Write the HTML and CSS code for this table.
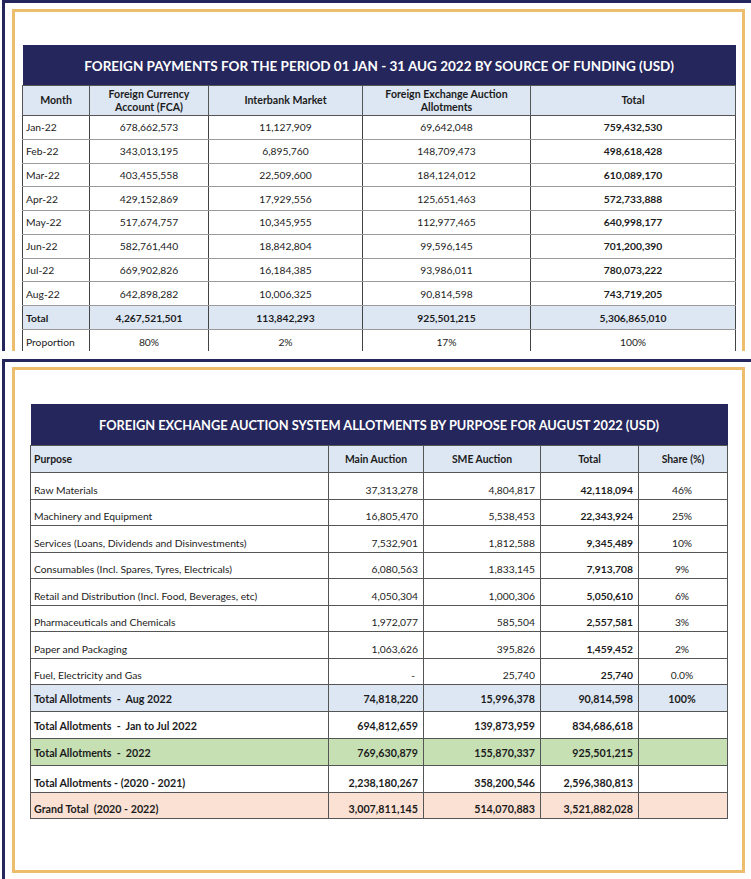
FILE: index.html
```html
<!DOCTYPE html>
<html>
<head>
<meta charset="utf-8">
<title>Foreign Payments</title>
<link rel="stylesheet" href="styles.css">
</head>
<body>
<div class="panel p1">
  <div class="frame f1">
    <table class="t1">
      <colgroup><col class="a1"><col class="a2"><col class="a3"><col class="a4"><col class="a5"></colgroup>
      <tr class="title"><th colspan="5">FOREIGN PAYMENTS FOR THE PERIOD 01 JAN - 31 AUG 2022 BY SOURCE OF FUNDING (USD)</th></tr>
      <tr class="head"><th>Month</th><th>Foreign Currency<br>Account (FCA)</th><th>Interbank Market</th><th>Foreign Exchange Auction<br>Allotments</th><th>Total</th></tr>
      <tr><td class="l">Jan-22</td><td>678,662,573</td><td>11,127,909</td><td>69,642,048</td><td class="b">759,432,530</td></tr>
      <tr><td class="l">Feb-22</td><td>343,013,195</td><td>6,895,760</td><td>148,709,473</td><td class="b">498,618,428</td></tr>
      <tr><td class="l">Mar-22</td><td>403,455,558</td><td>22,509,600</td><td>184,124,012</td><td class="b">610,089,170</td></tr>
      <tr><td class="l">Apr-22</td><td>429,152,869</td><td>17,929,556</td><td>125,651,463</td><td class="b">572,733,888</td></tr>
      <tr><td class="l">May-22</td><td>517,674,757</td><td>10,345,955</td><td>112,977,465</td><td class="b">640,998,177</td></tr>
      <tr><td class="l">Jun-22</td><td>582,761,440</td><td>18,842,804</td><td>99,596,145</td><td class="b">701,200,390</td></tr>
      <tr><td class="l">Jul-22</td><td>669,902,826</td><td>16,184,385</td><td>93,986,011</td><td class="b">780,073,222</td></tr>
      <tr><td class="l">Aug-22</td><td>642,898,282</td><td>10,006,325</td><td>90,814,598</td><td class="b">743,719,205</td></tr>
      <tr class="tot"><td class="l">Total</td><td>4,267,521,501</td><td>113,842,293</td><td>925,501,215</td><td>5,306,865,010</td></tr>
      <tr class="prop"><td class="l">Proportion</td><td>80%</td><td>2%</td><td>17%</td><td>100%</td></tr>
    </table>
  </div>
</div>
<div class="panel p2">
  <div class="frame f2">
    <table class="t2">
      <colgroup><col class="b1"><col class="b2"><col class="b3"><col class="b4"><col class="b5"></colgroup>
      <tr class="title"><th colspan="5">FOREIGN EXCHANGE AUCTION SYSTEM ALLOTMENTS BY PURPOSE FOR AUGUST 2022 (USD)</th></tr>
      <tr class="head"><th class="l">Purpose</th><th>Main Auction</th><th>SME Auction</th><th>Total</th><th>Share (%)</th></tr>
      <tr class="d"><td class="l">Raw Materials</td><td>37,313,278</td><td>4,804,817</td><td class="b">42,118,094</td><td class="c">46%</td></tr>
      <tr class="d"><td class="l">Machinery and Equipment</td><td>16,805,470</td><td>5,538,453</td><td class="b">22,343,924</td><td class="c">25%</td></tr>
      <tr class="d"><td class="l">Services (Loans, Dividends and Disinvestments)</td><td>7,532,901</td><td>1,812,588</td><td class="b">9,345,489</td><td class="c">10%</td></tr>
      <tr class="d"><td class="l">Consumables (Incl. Spares, Tyres, Electricals)</td><td>6,080,563</td><td>1,833,145</td><td class="b">7,913,708</td><td class="c">9%</td></tr>
      <tr class="d"><td class="l">Retail and Distribution (Incl. Food, Beverages, etc)</td><td>4,050,304</td><td>1,000,306</td><td class="b">5,050,610</td><td class="c">6%</td></tr>
      <tr class="d"><td class="l">Pharmaceuticals and Chemicals</td><td>1,972,077</td><td>585,504</td><td class="b">2,557,581</td><td class="c">3%</td></tr>
      <tr class="d"><td class="l">Paper and Packaging</td><td>1,063,626</td><td>395,826</td><td class="b">1,459,452</td><td class="c">2%</td></tr>
      <tr class="d"><td class="l">Fuel, Electricity and Gas</td><td class="dash">-</td><td>25,740</td><td class="b">25,740</td><td class="c">0.0%</td></tr>
      <tr class="s blue"><td class="l">Total Allotments &nbsp;- &nbsp;Aug 2022</td><td>74,818,220</td><td>15,996,378</td><td>90,814,598</td><td class="c">100%</td></tr>
      <tr class="s"><td class="l">Total Allotments &nbsp;- &nbsp;Jan to Jul 2022</td><td>694,812,659</td><td>139,873,959</td><td>834,686,618</td><td class="c"></td></tr>
      <tr class="s green"><td class="l">Total Allotments &nbsp;- &nbsp;2022</td><td>769,630,879</td><td>155,870,337</td><td>925,501,215</td><td class="c"></td></tr>
      <tr class="s low"><td class="l">Total Allotments - (2020 - 2021)</td><td>2,238,180,267</td><td>358,200,546</td><td>2,596,380,813</td><td class="c"></td></tr>
      <tr class="s peach low"><td class="l">Grand Total &nbsp;(2020 - 2022)</td><td>3,007,811,145</td><td>514,070,883</td><td>3,521,882,028</td><td class="c"></td></tr>
    </table>
  </div>
</div>
</body>
</html>
```

FILE: styles.css
```css
html, body {
  margin: 0;
  padding: 0;
  background: #ffffff;
}
body {
  width: 751px;
  height: 879px;
  overflow: hidden;
  font-family: Lato, "Open Sans", sans-serif;
  color: #1c1c1c;
}
.panel {
  margin-left: 2px;
  border-top: 3px solid #25265c;
  border-left: 3px solid #25265c;
  box-sizing: border-box;
}
.p1 {
  height: 351px;
  overflow: hidden;
  padding: 6px 6px 0 7px;
}
.p2 {
  margin-top: 8px;
  height: 520px;
  padding: 5px 6px 6px 7px;
}
.frame {
  border: 3px solid #ebbd6d;
  box-sizing: border-box;
}
.f1 {
  height: 400px;
  padding: 33px 7px 0 7px;
}
.f2 {
  height: 506px;
  padding: 34px 15px 0 15px;
}
table {
  border-collapse: collapse;
  table-layout: fixed;
}
.t1 { width: 713px; }
.t2 { width: 697px; }
.a1 { width: 67px; }
.a2 { width: 119px; }
.a3 { width: 154px; }
.a4 { width: 168px; }
.a5 { width: 205px; }
.b1 { width: 298px; }
.b2 { width: 95px; }
.b3 { width: 117px; }
.b4 { width: 98px; }
.b5 { width: 89px; }

.title th {
  background: #25265c;
  color: #ffffff;
  font-weight: 700;
  text-align: center;
  padding: 1px 0 0 0;
  border: none;
}
.t1 .title th { height: 39px; font-size: 13.5px; }
.t2 .title th { height: 40px; font-size: 12.8px; }

.head th {
  background: #dde7f3;
  font-weight: 700;
  line-height: 13px;
  text-align: center;
  padding: 0 2px;
  color: #1c1c1c;
}
.t1 .head th {
  height: 29px;
  font-size: 10.6px;
  border: 1px solid #555;
}
.t1 td {
  font-size: 10.3px;
  height: 22.75px;
  padding: 0 3px;
  text-align: center;
  border-left: 1px solid #444;
  border-right: 1px solid #444;
  border-top: 1px solid #9a9a9a;
  border-bottom: 1px solid #9a9a9a;
  white-space: nowrap;
}
.t1 td.l { text-align: left; }
.t1 td.b { font-weight: 700; }
.t1 .tot td { background: #dde7f3; font-weight: 700; height: 23px; }
.t1 .prop td { height: 23px; border-bottom: none; }

.t2 .head th {
  height: 26px;
  font-size: 10.4px;
  border: 1px solid #555;
}
.t2 .head th.l { text-align: left; padding-left: 3px; }
.t2 td {
  font-size: 10.3px;
  padding: 0 5px 3px 3px;
  text-align: right;
  vertical-align: bottom;
  border: 1px solid #555;
  white-space: nowrap;
}
.t2 td.l { text-align: left; }
.t2 td.c { text-align: center; }
.t2 td.b { font-weight: 700; }
.t2 td.dash { padding-right: 8px; }
.t2 .d td { height: 22.5px; }
.t2 .s td {
  height: 26px;
  font-size: 10.7px;
  font-weight: 700;
  vertical-align: middle;
  padding-bottom: 0;
}
.t2 .s.low td { vertical-align: bottom; padding-bottom: 3px; height: 22.5px; }
.t2 .blue td { background: #dde7f3; }
.t2 .green td { background: #c6e0b4; }
.t2 .peach td { background: #fbe1d4; }
```
